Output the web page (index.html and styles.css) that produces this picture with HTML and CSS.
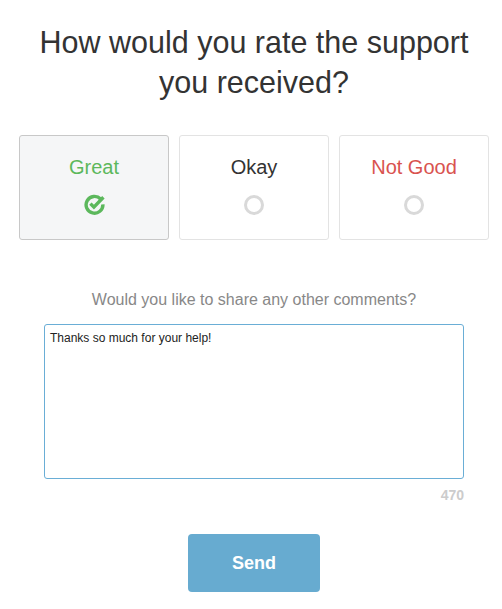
FILE: index.html
```html
<!DOCTYPE html>
<html>
<head>
<meta charset="utf-8">
<link rel="stylesheet" href="styles.css">
</head>
<body>
<div class="page">
  <h1 class="title">How would you rate the support you received?</h1>
  <div class="options">
    <div class="option selected">
      <div class="label great">Great</div>
      <svg class="icon" width="24" height="22" viewBox="0 0 24 22">
        <path d="M17.6 6 A8.4 8.4 0 1 0 19.9 11.4" fill="none" stroke="#5cb85c" stroke-width="3.4"/>
        <path d="M7.4 10.6 L10.9 14.1 L20.4 4.2" fill="none" stroke="#5cb85c" stroke-width="3.4"/>
      </svg>
    </div>
    <div class="option">
      <div class="label">Okay</div>
      <span class="radio"></span>
    </div>
    <div class="option">
      <div class="label bad">Not Good</div>
      <span class="radio"></span>
    </div>
  </div>
  <p class="prompt">Would you like to share any other comments?</p>
  <div class="comment-box">
    <textarea class="comment">Thanks so much for your help!</textarea>
    <div class="count">470</div>
  </div>
  <button class="send">Send</button>
</div>
</body>
</html>
```
FILE: styles.css
```css
html, body {
  margin: 0;
  padding: 0;
  background: #fff;
}
body {
  font-family: "Liberation Sans", Arial, Helvetica, sans-serif;
  color: #333;
}
.page {
  padding: 0 13px 0 19px;
  display: flex;
  flex-direction: column;
  align-items: center;
}
.title {
  margin: 22px 0 0;
  font-size: 30.5px;
  font-weight: normal;
  line-height: 40px;
  text-align: center;
  width: 470px;
  color: #333;
}
.options {
  margin-top: 33px;
  display: flex;
  gap: 10px;
  width: 470px;
}
.option {
  flex: 1;
  height: 105px;
  box-sizing: border-box;
  border: 1px solid #e3e3e3;
  border-radius: 3px;
  display: flex;
  flex-direction: column;
  align-items: center;
  padding-top: 19px;
  background: #fff;
}
.option.selected {
  background: #f5f6f7;
  border-color: #c8c8c8;
}
.label {
  font-size: 20px;
  line-height: 24px;
  color: #333;
}
.label.great { color: #5cb85c; }
.label.bad { color: #d9534f; }
.icon {
  margin-top: 14px;
  margin-left: 2px;
  display: block;
}
.radio {
  margin-top: 16px;
  width: 20px;
  height: 20px;
  box-sizing: border-box;
  border: 3px solid #d9d9d9;
  border-radius: 50%;
  display: block;
}
.prompt {
  margin: 50px 0 0;
  font-size: 16px;
  line-height: 20px;
  color: #888;
}
.comment-box {
  margin-top: 14px;
  width: 420px;
}
.comment {
  display: block;
  width: 420px;
  height: 155px;
  box-sizing: border-box;
  border: 1px solid #6aaed6;
  border-radius: 3px;
  padding: 6px 5px;
  font-family: "Liberation Sans", Arial, sans-serif;
  font-size: 12px;
  color: #222;
  resize: none;
  outline: none;
}
.count {
  margin-top: 7px;
  text-align: right;
  font-size: 14px;
  font-weight: bold;
  color: #cccccc;
  line-height: 18px;
}
.send {
  margin-top: 30px;
  width: 132px;
  height: 58px;
  border: none;
  border-radius: 4px;
  background: #67abd0;
  color: #fff;
  font-family: "Liberation Sans", Arial, sans-serif;
  font-size: 18px;
  font-weight: bold;
}
```
